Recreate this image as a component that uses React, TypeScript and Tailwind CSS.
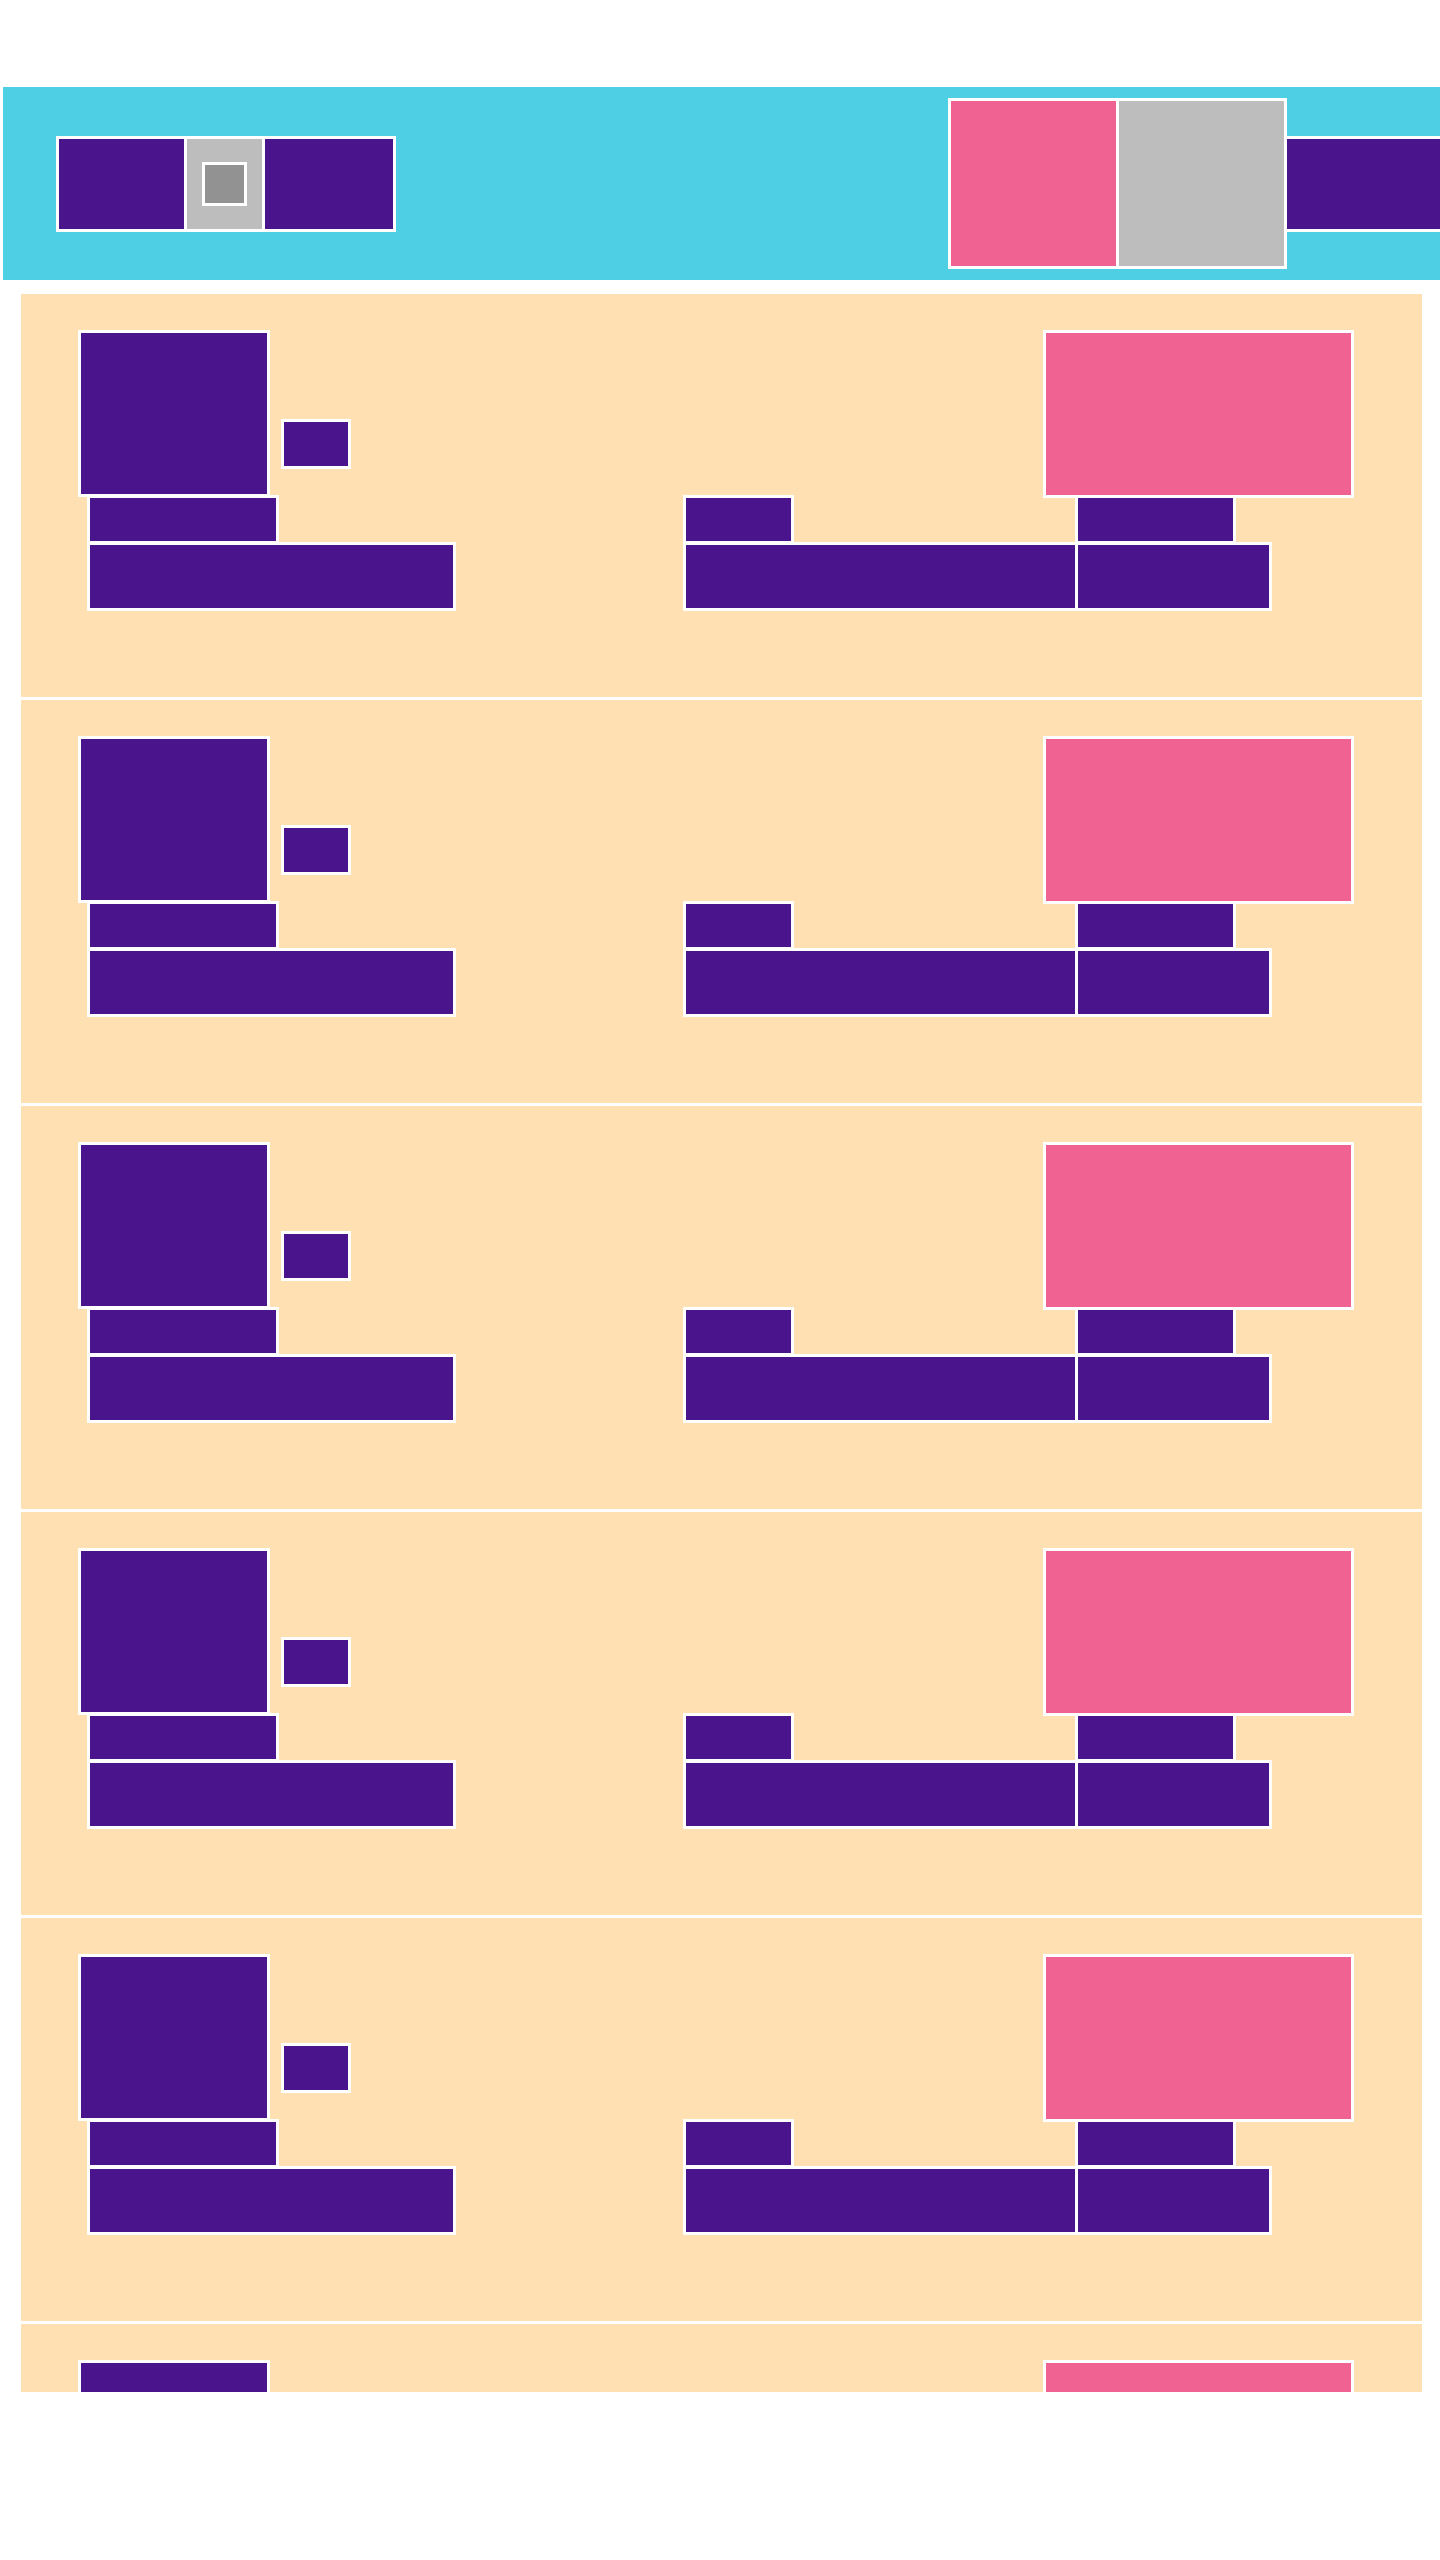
import React from "react";

const box = "border-[3px] border-white shrink-0";
const purple = "bg-[#4a148c]";
const pink = "bg-[#f06292]";
const grey = "bg-[#bdbdbd]";

function Card() {
  return (
    <div className="h-[403px] shrink-0 bg-[#ffe0b2] pt-[36px] flex flex-col">
      <div className="flex items-start">
        <div className={`${box} ${purple} ml-[57px] w-[192px] h-[167px]`} />
        <div className={`${box} ${purple} ml-[11px] mt-[89px] w-[70px] h-[50px]`} />
        <div className={`${box} ${pink} ml-auto mr-[68px] w-[311px] h-[168px]`} />
      </div>
      <div className="-mt-[3px] flex items-start">
        <div className="ml-[66px] w-[369px] flex flex-col shrink-0">
          <div className={`${box} ${purple} w-[192px] h-[49px]`} />
          <div className={`${box} ${purple} -mt-[2px] w-[369px] h-[69px]`} />
        </div>
        <div className="ml-[227px] w-[395px] flex flex-col shrink-0">
          <div className={`${box} ${purple} w-[111px] h-[49px]`} />
          <div className={`${box} ${purple} -mt-[2px] w-[395px] h-[69px]`} />
        </div>
        <div className="-ml-[3px] w-[197px] flex flex-col shrink-0 relative">
          <div className={`${box} ${purple} w-[161px] h-[49px]`} />
          <div className={`${box} ${purple} -mt-[2px] w-[197px] h-[69px]`} />
        </div>
      </div>
    </div>
  );
}

export default function App() {
  return (
    <div className="w-[1440px] h-[2560px] bg-white overflow-hidden pt-[87px] pl-[3px]">
      <div className="h-[193px] bg-[#4ecfe3] flex items-center overflow-hidden">
        <div className="ml-[53px] bg-white p-[3px] flex gap-[3px] shrink-0">
          <div className={`${purple} w-[125px] h-[90px]`} />
          <div className={`${grey} w-[75px] h-[90px] flex items-center justify-center`}>
            <div className="w-[45px] h-[44px] border-[3px] border-white bg-[#929292]" />
          </div>
          <div className={`${purple} w-[128px] h-[90px]`} />
        </div>
        <div className="ml-[552px] bg-white p-[3px] flex gap-[3px] shrink-0">
          <div className={`${pink} w-[165px] h-[165px]`} />
          <div className={`${grey} w-[165px] h-[165px]`} />
        </div>
        <div className={`${purple} w-[200px] h-[96px] shrink-0 border-y-[3px] border-r-[3px] border-white`} />
      </div>
      <div className="mt-[14px] mx-[18px] h-[2098px] overflow-hidden flex flex-col gap-[3px] bg-white">
        <Card />
        <Card />
        <Card />
        <Card />
        <Card />
        <Card />
      </div>
    </div>
  );
}
